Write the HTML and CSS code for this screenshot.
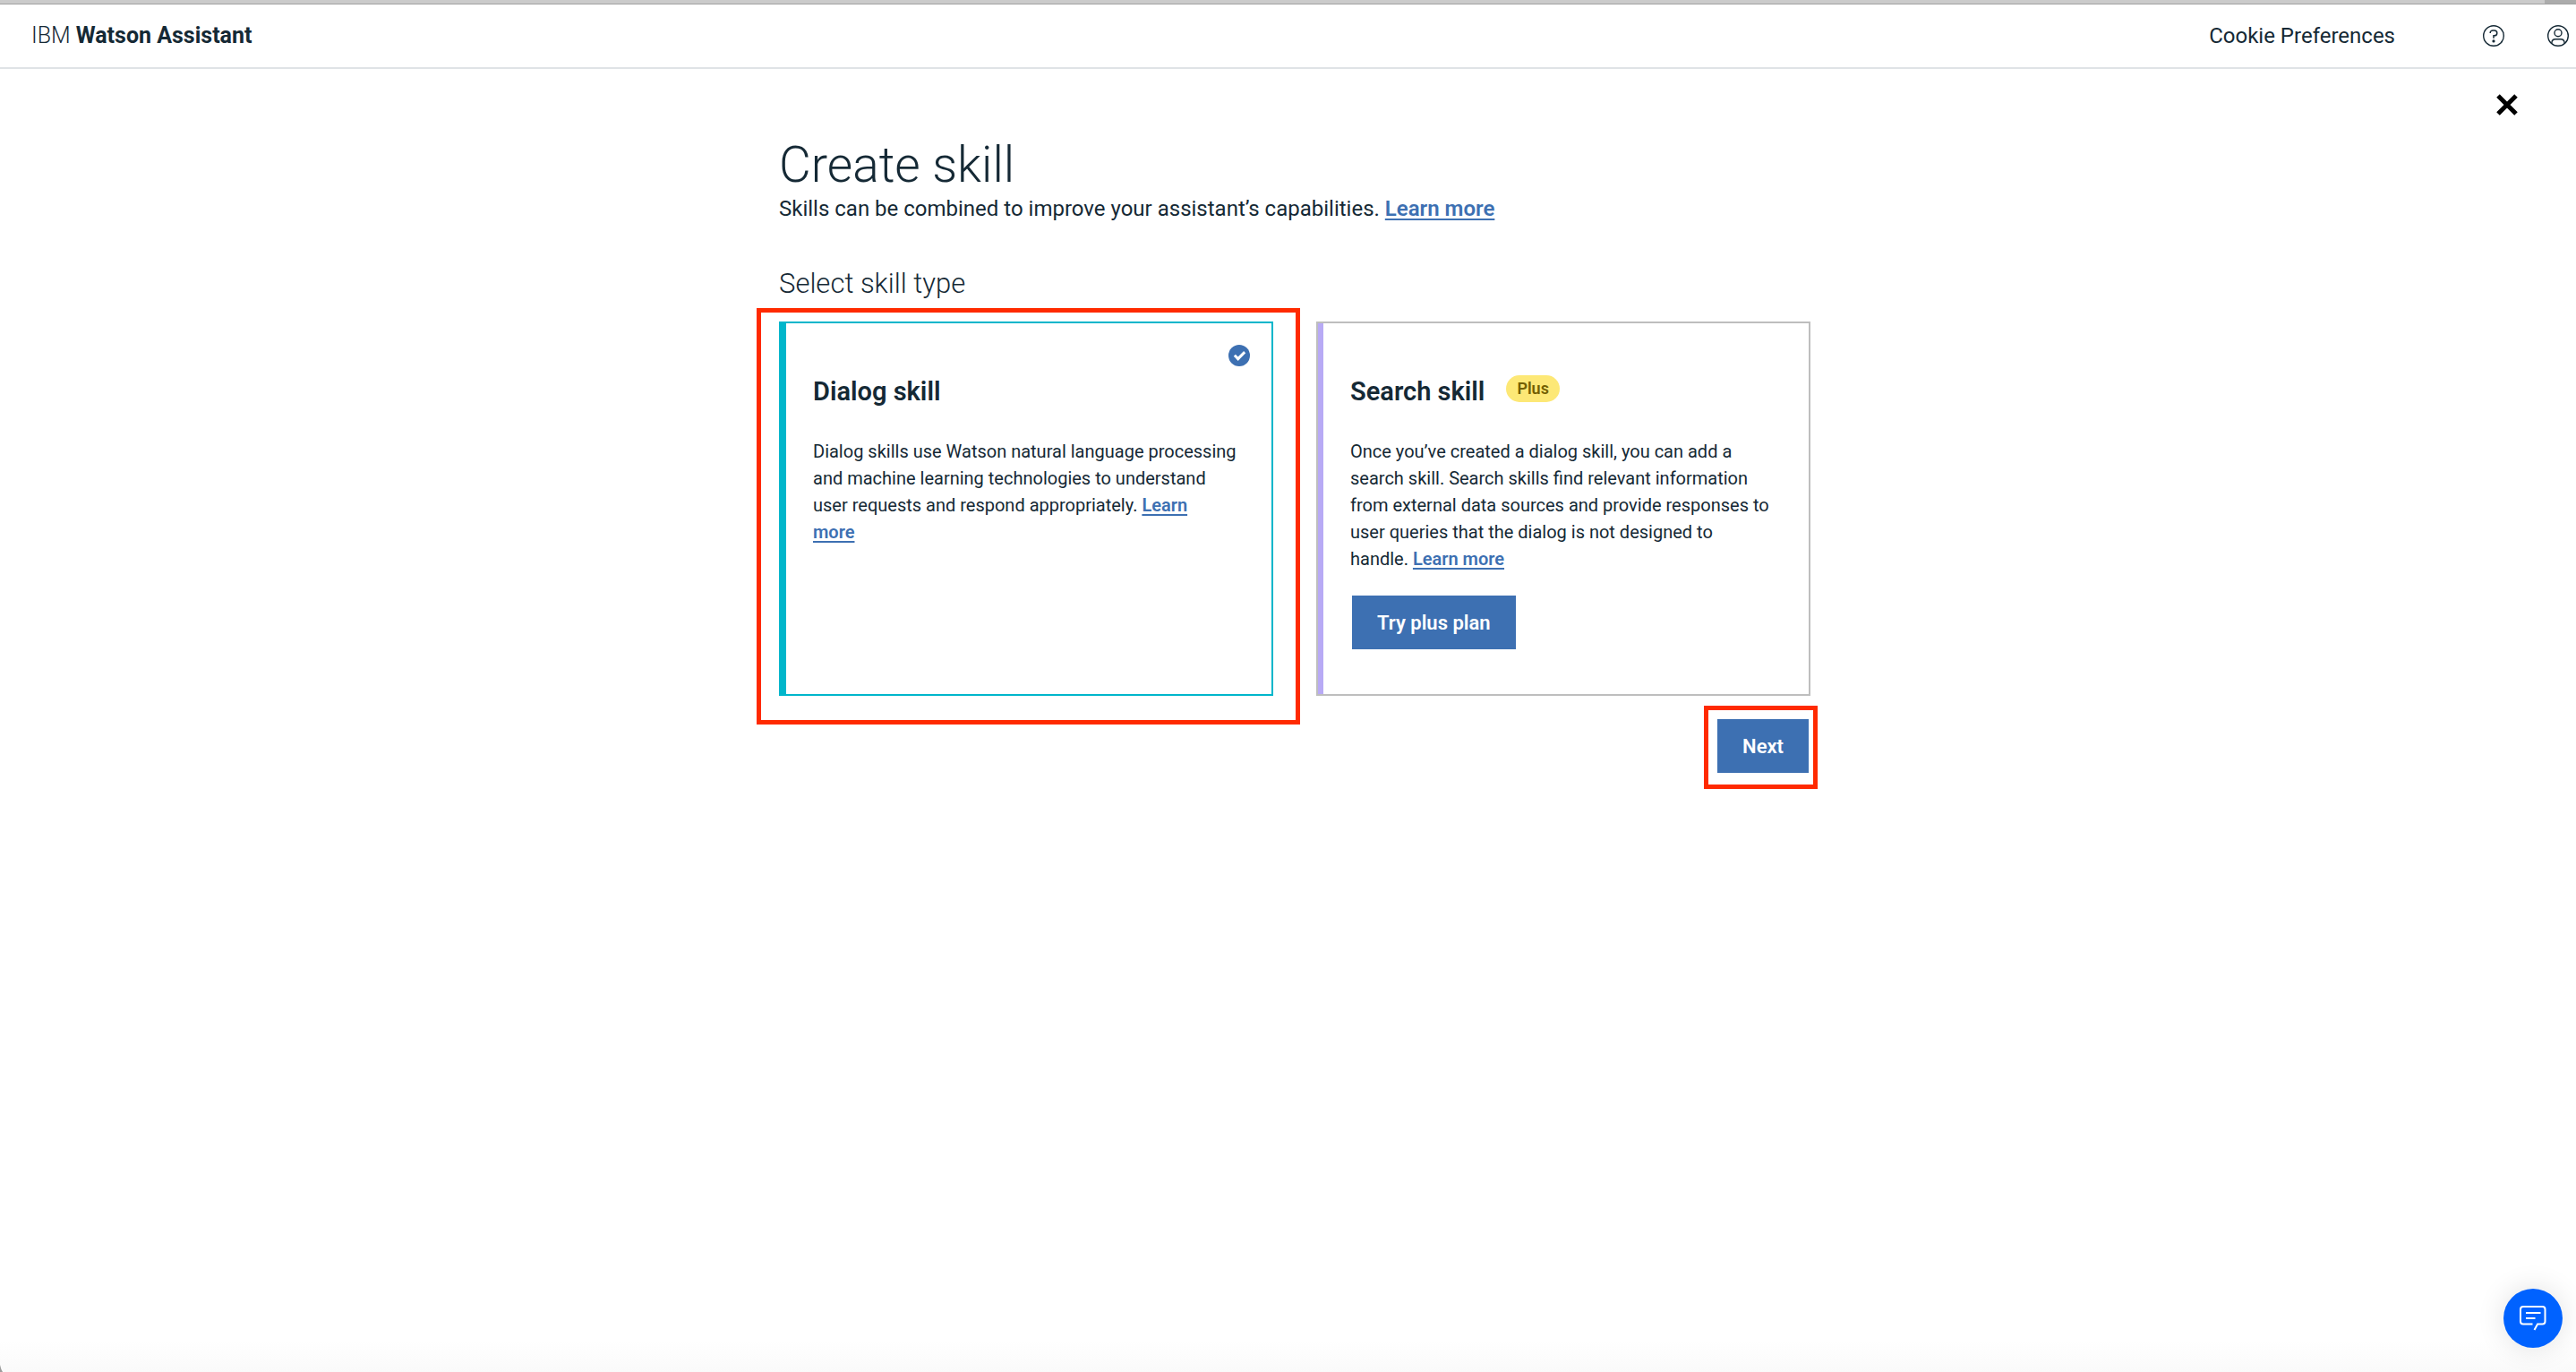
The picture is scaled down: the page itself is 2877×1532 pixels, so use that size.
FILE: index.html
```html
<!DOCTYPE html>
<html lang="en">
<head>
<meta charset="utf-8">
<title>IBM Watson Assistant</title>
<link rel="stylesheet" href="styles.css">
</head>
<body>
<div class="window-edge"><span class="window-edge-end"></span></div>

<header class="header">
  <div class="brand">IBM <b>Watson Assistant</b></div>
  <nav class="header-nav">
    <a class="cookie-link" href="#cookies">Cookie Preferences</a>
    <button class="icon-button" type="button" aria-label="Help">
      <svg viewBox="0 0 24 24" width="24" height="24" fill="none" stroke="currentColor">
        <circle cx="12" cy="12" r="11.3" stroke-width="1.4"/>
        <path d="M8.2 9V8.6c0-1.6 1.3-2.6 2.9-2.6h1.6c1.8 0 3.1 1.2 3.1 2.9s-1.3 2.9-3.1 2.9H12v2.9" stroke-width="1.5"/>
        <circle cx="12" cy="17.9" r="1.6" fill="currentColor" stroke="none"/>
      </svg>
    </button>
    <button class="icon-button" type="button" aria-label="Account">
      <svg viewBox="0 0 24 24" width="24" height="24" fill="none" stroke="currentColor" stroke-width="1.4">
        <circle cx="12" cy="12" r="11.3"/>
        <circle cx="12" cy="8.7" r="4"/>
        <path d="M4.9 20.8V20c0-2.7 2-4.2 4.3-4.2h5.6c2.3 0 4.3 1.5 4.3 4.2v.8"/>
      </svg>
    </button>
  </nav>
</header>

<main class="page">
  <div class="close-row">
    <button class="icon-button close" type="button" aria-label="Close">
      <svg viewBox="0 0 24 24" width="24" height="24" fill="none" stroke="currentColor" stroke-width="5">
        <path d="M2 2l20 20M22 2L2 22"/>
      </svg>
    </button>
  </div>

  <div class="content">
    <h1 class="title">Create skill</h1>
    <p class="intro">Skills can be combined to improve your assistant’s capabilities. <a class="link" href="#skills">Learn more</a></p>
    <h2 class="subtitle">Select skill type</h2>

    <div class="cards">
      <section class="card card-dialog">
        <input class="pick" type="radio" name="skill" id="dialog" checked>
        <div class="card-head">
          <h3 class="card-title"><label for="dialog">Dialog skill</label></h3>
        </div>
        <p class="card-text">Dialog skills use Watson natural language processing and machine learning technologies to understand user requests and respond appropriately. <a class="link" href="#dialog-skill">Learn<br>more</a></p>
        <span class="highlight highlight-card"></span>
      </section>

      <section class="card card-search">
        <input class="pick" type="radio" name="skill" id="search" disabled>
        <div class="card-head">
          <h3 class="card-title"><label for="search">Search skill</label></h3>
          <span class="badge">Plus</span>
        </div>
        <p class="card-text">Once you’ve created a dialog skill, you can add a search skill. Search skills find relevant information from external data sources and provide responses to user queries that the dialog is not designed to<br>handle. <a class="link" href="#search-skill">Learn more</a></p>
        <button class="button button-plan" type="button">Try plus plan</button>
      </section>
    </div>

    <div class="actions">
      <div class="action">
        <button class="button" type="button">Next</button>
        <span class="highlight highlight-action"></span>
      </div>
    </div>
  </div>
</main>

<button class="chat" type="button" aria-label="Open chat">
  <svg viewBox="0 0 30 28" width="30" height="28" fill="none" stroke="currentColor" stroke-width="2">
    <path d="M16.5 27l3.6-6.5h5.4a3 3 0 0 0 3-3V4a3 3 0 0 0-3-3H4a3 3 0 0 0-3 3v13.5a3 3 0 0 0 3 3h10.5"/>
    <path d="M7 8h16.5M7 14h10.5"/>
  </svg>
</button>
<svg class="window-corner" viewBox="0 0 3 8" width="3" height="8"><path d="M0 0Q1 5 3 8H0z" fill="#9c9c9c"/></svg>
</body>
</html>
```
FILE: styles.css
```css
*,
*::after {
  box-sizing: border-box;
}

body {
  display: flex;
  flex-direction: column;
  min-height: 100vh;
  margin: 0;
  background: linear-gradient(to top, #fafafa, #fff 36px);
  color: #152935;
  font-family: Roboto, "Liberation Sans", sans-serif;
  font-size: 24px;
  line-height: 32px;
}

h1,
h2,
h3,
p {
  margin: 0;
}

button {
  padding: 0;
  border: 0;
  background: none;
  color: inherit;
  font: inherit;
  cursor: pointer;
}

svg {
  display: block;
}

/* Bottom edge of the browser chrome */
.window-edge {
  display: flex;
  justify-content: flex-end;
  height: 5px;
  border-bottom: 1px solid #a0a0a0;
  background: #cbcbcb;
}

.window-edge-end {
  width: 35px;
  background: #acacac;
}

.header {
  display: flex;
  align-items: center;
  justify-content: space-between;
  height: 72px;
  padding: 0 8px 0 35px;
  border-bottom: 2px solid #dfe3e6;
}

.brand {
  font-size: 25px;
  font-weight: 300;
}

.brand b {
  font-weight: 700;
}

.header-nav {
  display: flex;
  align-items: center;
  gap: 48px;
}

.cookie-link {
  margin-right: 50px;
  color: inherit;
  text-decoration: none;
}

.close-row {
  display: flex;
  justify-content: flex-end;
  padding: 28px 65px 22px 0;
}

.close {
  color: #000;
}

.page {
  flex: 1;
}

.content {
  width: 1167px;
  max-width: 100%;
  margin: 0 auto;
  padding-left: 15px;
}

.title {
  font-size: 55px;
  font-weight: 300;
  line-height: 66px;
}

.subtitle {
  margin: 48px 0 22px;
  font-size: 31px;
  font-weight: 300;
  line-height: 40px;
}

.link {
  color: #3d70b2;
  font-weight: 600;
  text-decoration-thickness: 2px;
  text-underline-offset: 3px;
}

.cards {
  display: grid;
  grid-template-columns: 1fr 1fr;
  gap: 48px;
}

.card {
  position: relative;
  padding: 58px 36px 50px;
  border: 2px solid #bebebe;
}

.card-dialog {
  border-color: #00b6cb;
  box-shadow: inset 6px 0 #00b6cb;
}

.card-search {
  box-shadow: inset 6px 0 #b8aaf5;
}

.pick {
  position: absolute;
  top: 24px;
  right: 24px;
  width: 24px;
  height: 24px;
  margin: 0;
  border-radius: 50%;
  appearance: none;
}

.pick:checked {
  background: #3d70b2;
}

.pick:checked::after {
  content: "";
  position: absolute;
  top: 5px;
  left: 9px;
  width: 7px;
  height: 12px;
  border: solid #fff;
  border-width: 0 3px 3px 0;
  transform: rotate(45deg);
}

.card-head {
  display: flex;
  align-items: flex-start;
  gap: 24px;
  height: 36px;
  margin-bottom: 34px;
}

.card-title {
  font-size: 29px;
  font-weight: 600;
  line-height: 36px;
}

.badge {
  padding: 0 12px;
  border-radius: 15px;
  background: #fde876;
  color: #735f00;
  font-size: 18px;
  font-weight: 600;
  line-height: 30px;
}

.card-text {
  font-size: 20px;
  line-height: 30px;
}

.button {
  height: 60px;
  padding: 2px 28px 0;
  background: #3d70b2;
  color: #fff;
  font-size: 22px;
  font-weight: 600;
}

.button-plan {
  margin: 26px 2px 0;
}

.actions {
  display: flex;
  justify-content: flex-end;
  padding: 26px 2px 26px 0;
}

.action {
  position: relative;
}

/* Red call-out frames laid over the page */
.highlight {
  position: absolute;
  border: 5px solid #ff2a00;
  pointer-events: none;
}

.highlight-card {
  inset: -17px -32px -34px -27px;
}

.highlight-action {
  inset: -15px -10px -18px -15px;
}

.chat {
  position: fixed;
  right: 15px;
  bottom: 27px;
  display: grid;
  place-items: center;
  width: 66px;
  height: 66px;
  border-radius: 50%;
  background: #0062ff;
  box-shadow: 0 0 32px rgba(0, 0, 0, 0.12);
  color: #fff;
}

.window-corner {
  position: fixed;
  bottom: 0;
  left: 0;
}
```
